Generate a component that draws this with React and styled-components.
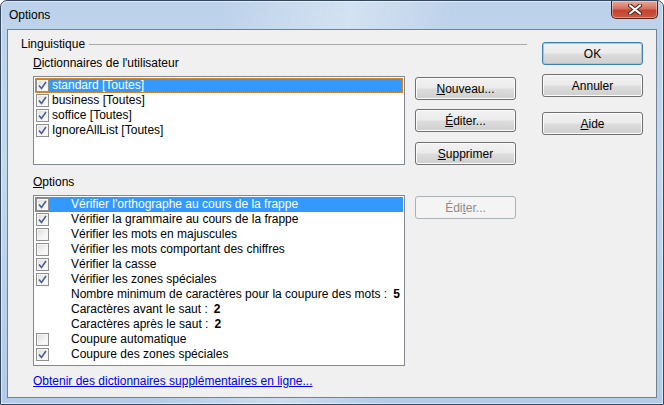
import React from 'react'
import styled, { createGlobalStyle, css } from 'styled-components'

const GlobalStyle = createGlobalStyle`
html, body {
    margin: 0;
    padding: 0;
    background: #ffffff;
}
body {
    font-family: "Liberation Sans", Arial, sans-serif;
    font-size: 12px;
    color: #000000;
}
`

const dictionaries = [
    { name: 'standard [Toutes]', checked: true, selected: true },
    { name: 'business [Toutes]', checked: true },
    { name: 'soffice [Toutes]', checked: true },
    { name: 'IgnoreAllList [Toutes]', checked: true },
]

const options = [
    { label: "Vérifier l'orthographe au cours de la frappe", checked: true, selected: true },
    { label: 'Vérifier la grammaire au cours de la frappe', checked: true },
    { label: 'Vérifier les mots en majuscules', checked: false },
    { label: 'Vérifier les mots comportant des chiffres', checked: false },
    { label: 'Vérifier la casse', checked: true },
    { label: 'Vérifier les zones spéciales', checked: true },
    { label: 'Nombre minimum de caractères pour la coupure des mots :', value: '5' },
    { label: 'Caractères avant le saut :', value: '2' },
    { label: 'Caractères après le saut :', value: '2' },
    { label: 'Coupure automatique', checked: false },
    { label: 'Coupure des zones spéciales', checked: true },
]

const CheckMark = () => (
    <svg width="9" height="9" viewBox="0 0 9 9">
        <path d="M1 4.5 L3.5 7.5 L8 1" fill="none" stroke="#4a5f97" strokeWidth="1.6" />
    </svg>
)

const CloseGlyph = () => (
    <svg width="14" height="11" viewBox="0 0 14 11">
        <path d="M2 1.5 L12 9.5 M12 1.5 L2 9.5" stroke="#4b1f1a" strokeWidth="4" strokeLinecap="round" />
        <path d="M2 1.5 L12 9.5 M12 1.5 L2 9.5" stroke="#ffffff" strokeWidth="2.2" strokeLinecap="round" />
    </svg>
)

const Mn = ({ children }) => <Under>{children}</Under>

const CheckBox = ({ checked }) => (
    <Box>{checked && <CheckMark />}</Box>
)

const App = () => {
    return (
        <>
            <GlobalStyle />
            <Window>
                <TitleBar>
                    <Title>Options</Title>
                    <CloseButton><CloseGlyph /></CloseButton>
                </TitleBar>
                <Client>
                    <LeftCol>
                        <GroupHeader>
                            <span>Linguistique</span>
                            <GroupLine />
                        </GroupHeader>
                        <Indent>
                            <SubLabel $top={5}><Mn>D</Mn>ictionnaires de l'utilisateur</SubLabel>
                            <ListRow $top={6}>
                                <ListBox $height={89}>
                                    {dictionaries.map(d => (
                                        <Row key={d.name} $selected={d.selected} $focused={d.selected}>
                                            <CheckBox checked={d.checked} />
                                            <RowText $indent={3}>{d.name}</RowText>
                                        </Row>
                                    ))}
                                </ListBox>
                                <ButtonCol>
                                    <Button><Mn>N</Mn>ouveau...</Button>
                                    <Button><Mn>É</Mn>diter...</Button>
                                    <Button $space={10}><Mn>S</Mn>upprimer</Button>
                                </ButtonCol>
                            </ListRow>
                            <SubLabel $top={10}><Mn>O</Mn>ptions</SubLabel>
                            <ListRow $top={6}>
                                <ListBox $height={171}>
                                    {options.map(o => (
                                        <Row key={o.label} $selected={o.selected}>
                                            {o.value ? <BoxSpacer /> : <CheckBox checked={o.checked} />}
                                            <RowText $indent={22}>
                                                {o.label}
                                                {o.value && <Value>{o.value}</Value>}
                                            </RowText>
                                        </Row>
                                    ))}
                                </ListBox>
                                <ButtonCol>
                                    <Button disabled>Édi<Mn>t</Mn>er...</Button>
                                </ButtonCol>
                            </ListRow>
                            <Link href="#">Obtenir des dictionnaires supplémentaires en ligne...</Link>
                        </Indent>
                    </LeftCol>
                    <RightCol>
                        <Button $default>OK</Button>
                        <Button>Annuler</Button>
                        <Button $space={15}><Mn>A</Mn>ide</Button>
                    </RightCol>
                </Client>
            </Window>
        </>
    )
}

export default App

const Window = styled.div`
width: 664px;
height: 405px;
box-sizing: border-box;
display: flex;
flex-direction: column;
border: 1px solid #34475e;
border-radius: 7px 7px 0 0;
overflow: hidden;
background:
    linear-gradient(100deg, rgba(255,255,255,0) 30%, rgba(255,255,255,0.35) 48%, rgba(255,255,255,0) 62%),
    linear-gradient(to bottom, #bcd2ea 0%, #c4d8ee 40%, #b3cbe6 100%);
box-shadow: inset 0 0 0 1px rgba(255,255,255,0.55);
`

const TitleBar = styled.div`
height: 28px;
display: flex;
align-items: flex-start;
padding-left: 8px;
flex-shrink: 0;
`

const Title = styled.div`
margin-top: 7px;
font-size: 12px;
line-height: 15px;
color: #000000;
`

const CloseButton = styled.div`
margin-left: auto;
margin-right: 5px;
width: 45px;
height: 17px;
display: flex;
align-items: center;
justify-content: center;
border: 1px solid #4e2320;
border-top: none;
border-radius: 0 0 5px 5px;
background: linear-gradient(to bottom, #e8a999 0%, #d6705e 45%, #c2432f 55%, #cc5a43 100%);
box-shadow: inset 0 0 0 1px rgba(255,255,255,0.35);
`

const Client = styled.div`
flex: 1;
margin: 0 6px 6px 6px;
border: 1px solid #6f8298;
background: #f0f0f0;
display: flex;
padding: 7px 13px 0 13px;
`

const LeftCol = styled.div`
width: 506px;
display: flex;
flex-direction: column;
`

const RightCol = styled.div`
width: 101px;
margin-left: 15px;
padding-top: 5px;
display: flex;
flex-direction: column;
gap: 9px;
`

const GroupHeader = styled.div`
display: flex;
align-items: center;
height: 14px;
line-height: 14px;
`

const GroupLine = styled.div`
flex: 1;
margin-left: 4px;
margin-top: 1px;
border-top: 1px solid #a9a9a9;
`

const Indent = styled.div`
margin-left: 12px;
display: flex;
flex-direction: column;
`

const SubLabel = styled.div`
margin-top: ${p => p.$top}px;
line-height: 14px;
`

const Under = styled.span`
text-decoration: underline;
`

const ListRow = styled.div`
display: flex;
align-items: flex-start;
margin-top: ${p => p.$top}px;
`

const ListBox = styled.div`
width: 372px;
height: ${p => p.$height}px;
box-sizing: border-box;
border: 1px solid #828790;
background: #ffffff;
padding: 1px;
display: flex;
flex-direction: column;
`

const Row = styled.div`
height: 15px;
box-sizing: border-box;
display: flex;
align-items: center;
padding-left: 1px;
${p => p.$selected && css`
    background: #3399ff;
    color: #ffffff;
`}
${p => p.$focused && css`
    outline: 1px dotted #e0902e;
    outline-offset: -1px;
`}
`

const Box = styled.div`
width: 11px;
height: 11px;
flex-shrink: 0;
border: 1px solid #8e8f8f;
background: linear-gradient(135deg, #dcdcdc 0%, #f4f4f4 60%, #ffffff 100%);
box-shadow: inset 0 0 0 1px #f6f6f6;
display: flex;
align-items: center;
justify-content: center;
`

const BoxSpacer = styled.div`
width: 13px;
flex-shrink: 0;
`

const RowText = styled.span`
margin-left: ${p => p.$indent}px;
white-space: nowrap;
line-height: 15px;
`

const Value = styled.b`
margin-left: 6px;
`

const ButtonCol = styled.div`
margin-left: 10px;
margin-top: 1px;
display: flex;
flex-direction: column;
gap: 9px;
`

const Button = styled.button`
width: 101px;
height: 23px;
box-sizing: border-box;
margin-top: ${p => (p.$space ? p.$space - 9 : 0)}px;
padding: 0;
font-family: "Liberation Sans", Arial, sans-serif;
font-size: 12px;
color: #000000;
border: 1px solid #707070;
border-radius: 3px;
background: linear-gradient(to bottom, #f2f2f2 0%, #ebebeb 48%, #dddddd 52%, #cfcfcf 100%);
box-shadow: inset 0 0 0 1px #fbfbfb;
${p => p.$default && css`
    border-color: #3c7fb1;
    box-shadow: inset 0 0 0 1px #8ad0f1;
`}
&:disabled {
    color: #8d8d8d;
    border-color: #adb2b5;
    background: #f4f4f4;
    box-shadow: none;
}
`

const Link = styled.a`
margin-top: 8px;
line-height: 14px;
color: #0000ee;
text-decoration: underline;
width: fit-content;
`
